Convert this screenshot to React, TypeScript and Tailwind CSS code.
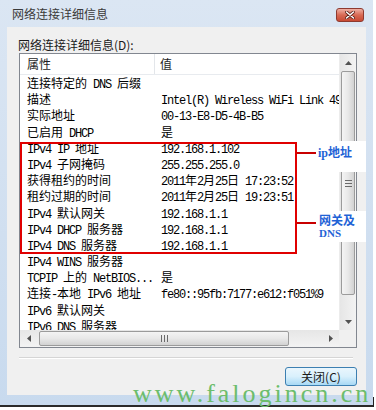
import React from "react";

const rows: [string, string][] = [
  ["连接特定的 DNS 后缀", ""],
  ["描述", "Intel(R) Wireless WiFi Link 4965AGN"],
  ["实际地址", "00-13-E8-D5-4B-B5"],
  ["已启用 DHCP", "是"],
  ["IPv4 IP 地址", "192.168.1.102"],
  ["IPv4 子网掩码", "255.255.255.0"],
  ["获得租约的时间", "2011年2月25日 17:23:52"],
  ["租约过期的时间", "2011年2月25日 19:23:51"],
  ["IPv4 默认网关", "192.168.1.1"],
  ["IPv4 DHCP 服务器", "192.168.1.1"],
  ["IPv4 DNS 服务器", "192.168.1.1"],
  ["IPv4 WINS 服务器", ""],
  ["TCPIP 上的 NetBIOS...", "是"],
  ["连接-本地 IPv6 地址", "fe80::95fb:7177:e612:f051%9"],
  ["IPv6 默认网关", ""],
  ["IPv6 DNS 服务器", ""],
];

// latin runs get the narrow mono face, like the old SimSun half-width glyphs
function Txt({ s }: { s: string }) {
  const parts = s.split(/([\x20-\x7e]+)/).filter(Boolean);
  return (
    <>
      {parts.map((p, i) =>
        /^[\x20-\x7e]+$/.test(p) ? (
          <span key={i} className="font-['Liberation_Mono'] text-[12px] tracking-[-1.2px] whitespace-pre">
            {p}
          </span>
        ) : (
          <span key={i}>{p}</span>
        )
      )}
    </>
  );
}

function Arrow({ dir }: { dir: "up" | "down" | "left" | "right" }) {
  const pts = {
    up: "0,4 3.5,0 7,4",
    down: "0,0 3.5,4 7,0",
    left: "4,0 0,3.5 4,7",
    right: "0,0 4,3.5 0,7",
  }[dir];
  const vert = dir === "up" || dir === "down";
  return (
    <svg width={vert ? 7 : 4} height={vert ? 4 : 7} viewBox={vert ? "0 0 7 4" : "0 0 4 7"}>
      <polygon points={pts} fill="#525252" />
    </svg>
  );
}

export default function App() {
  return (
    <div className="relative w-[376px] h-[410px] overflow-hidden bg-white font-['Noto_Sans_CJK_SC',sans-serif]">
      <div className="w-[373px] h-[407px] flex flex-col bg-gradient-to-b from-[#dbe6f3] to-[#c8daee] border-b-2 border-[#2a2a2a]">
        {/* title bar */}
        <div className="h-[27px] flex items-start justify-between">
          <span className="pl-[12px] pt-[6px] text-[12px] leading-[16px] text-[#3a3a3a]">网络连接详细信息</span>
          <div className="mt-[8px] mr-[9px] w-[28px] h-[14px] rounded-[3px] border border-[#8e3a30] bg-gradient-to-b from-[#eeb0a4] via-[#d86a55] to-[#c84a33] flex items-center justify-center">
            <svg width="10" height="8" viewBox="0 0 10 8">
              <path d="M1.5 1 L8.5 7 M8.5 1 L1.5 7" stroke="#5a1d15" strokeWidth="3" strokeLinecap="round" />
              <path d="M1.5 1 L8.5 7 M8.5 1 L1.5 7" stroke="#ffffff" strokeWidth="1.6" strokeLinecap="round" />
            </svg>
          </div>
        </div>

        {/* client area */}
        <div className="ml-[7px] w-[359px] h-[368px] bg-[#f0f0f0] flex flex-col pl-[12px] pr-[9px]">
          <div className="pt-[10px] -ml-[1px] text-[12px] leading-[16px] text-[#1a1a1a]">网络连接详细信息(D):</div>

          <div className="h-[295px] border border-[#828790] bg-white flex flex-col">
            <div className="flex h-[276px]">
              <div className="w-[319px] overflow-hidden whitespace-nowrap">
                <div className="h-[21px] flex items-center border-b border-[#e8ebef] text-[12px] text-[#1e1e1e]">
                  <div className="w-[135px] pl-[7px] h-full flex items-center border-r border-[#e3e6ea]">属性</div>
                  <div className="pl-[5px]">值</div>
                </div>
                {rows.map(([k, v]) => (
                  <div key={k} className="flex h-[16.2px] leading-[16.2px] text-[12px] text-black">
                    <div className="w-[141px] pl-[7px] shrink-0">
                      <Txt s={k} />
                    </div>
                    <div>
                      <Txt s={v} />
                    </div>
                  </div>
                ))}
              </div>

              {/* vertical scrollbar */}
              <div className="w-[17px] flex flex-col bg-gradient-to-r from-[#e6e6e6] to-[#f3f3f3] border-l border-[#ececec]">
                <div className="h-[17px] flex items-center justify-center">
                  <Arrow dir="up" />
                </div>
                <div className="h-[224px] mx-[1px] rounded-[2px] border border-[#9b9b9b] bg-gradient-to-r from-[#f4f4f4] via-[#e8e8e8] to-[#d2d2d2] flex items-center justify-center">
                  <div className="flex flex-col gap-[2px]">
                    <div className="w-[7px] h-px bg-[#6a6a6a]" />
                    <div className="w-[7px] h-px bg-[#6a6a6a]" />
                    <div className="w-[7px] h-px bg-[#6a6a6a]" />
                  </div>
                </div>
                <div className="flex-1" />
                <div className="h-[17px] flex items-center justify-center">
                  <Arrow dir="down" />
                </div>
              </div>
            </div>

            {/* horizontal scrollbar */}
            <div className="flex h-[17px]">
              <div className="w-[319px] flex items-center bg-gradient-to-b from-[#e6e6e6] to-[#f3f3f3]">
                <div className="w-[17px] flex items-center justify-center">
                  <Arrow dir="left" />
                </div>
                <div className="ml-[2px] w-[250px] h-[15px] rounded-[2px] border border-[#9b9b9b] bg-gradient-to-b from-[#f4f4f4] via-[#e8e8e8] to-[#d2d2d2] flex items-center justify-center">
                  <div className="flex gap-[2px]">
                    <div className="w-px h-[7px] bg-[#6a6a6a]" />
                    <div className="w-px h-[7px] bg-[#6a6a6a]" />
                    <div className="w-px h-[7px] bg-[#6a6a6a]" />
                  </div>
                </div>
                <div className="flex-1" />
                <div className="w-[17px] flex items-center justify-center">
                  <Arrow dir="right" />
                </div>
              </div>
              <div className="w-[17px] bg-[#f0f0f0]" />
            </div>
          </div>

          <div className="mt-[9px] mr-[4px] h-[2px] border-t border-[#d5d5d5] border-b border-b-white" />

          <div className="mt-[8px] flex justify-end">
            <button className="w-[72px] h-[19px] rounded-[3px] border border-[#3c7fb1] bg-gradient-to-b from-[#eaf6fd] via-[#d9f0fc] to-[#a7d9f5] text-[12px] leading-[16px] text-[#1a1a1a]">
              关闭(C)
            </button>
          </div>
        </div>
      </div>

      {/* red highlight box and annotations */}
      <div className="absolute left-[20px] top-[142px] w-[277px] h-[112px] border-2 border-[#e00000]" />
      <div className="absolute left-[297px] top-[152px] w-[21px] h-[2px] bg-[#c80000]" />
      <div className="absolute left-[297px] top-[222px] w-[22px] h-[2px] bg-[#c80000]" />
      <div className="absolute left-[316px] top-[141px] w-[50px] h-[31px] bg-white pl-[2px] pt-[4px] text-[12px] leading-[14px] font-bold text-[#1f63d6]">
        <span className="font-['Liberation_Serif']">ip</span>地址
      </div>
      <div className="absolute left-[316px] top-[211px] w-[50px] h-[31px] bg-white pl-[3px] pt-[1px] text-[12px] leading-[15px] font-bold text-[#1f63d6]">
        网关及
        <div className="font-['Liberation_Serif'] text-[11px] leading-[12px]">DNS</div>
      </div>

      {/* watermark */}
      <div className="absolute left-[133px] top-[381px] font-['Liberation_Serif'] text-[26px] leading-[26px] tracking-[3px] text-[#6cbd6c]">
        www.falogincn.cn
      </div>
      <div className="absolute left-[373px] top-[397px] w-px h-[10px] bg-[#222]" />
    </div>
  );
}
